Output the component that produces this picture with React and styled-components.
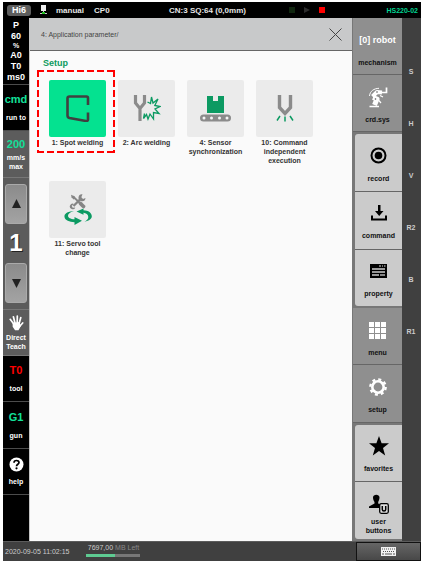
import React from "react";
import styled, { createGlobalStyle } from "styled-components";

const GlobalStyle = createGlobalStyle`
  * { box-sizing: border-box; }
  body { margin: 0; background: #fff; }
  button { font: inherit; color: inherit; border: 0; padding: 0; margin: 0; cursor: pointer; }
  svg { display: block; flex: none; }
  h1, p { margin: 0; }
`;

const Frame = styled.div`
  min-height: 100vh;
  padding: 2px 1px 2px 3px;
  display: flex;
  font-family: "Liberation Sans", Arial, sans-serif;
  font-size: 8px;
`;

const Pendant = styled.div`
  flex: 1;
  display: grid;
  grid-template-rows: 16px 1fr 20px;
  background: #404040;
`;

const TopBar = styled.header`
  display: grid;
  grid-template-columns: 162px 120px 1fr auto;
  align-items: center;
  padding: 0 3px 0 4px;
  background: #000;
  color: #e6e6e6;
  font-weight: bold;
  white-space: nowrap;
`;

const Cluster = styled.div`
  display: flex;
  align-items: center;
  gap: ${(p) => p.$gap || 8}px;
`;

const Brand = styled.span`
  width: 24px;
  border-radius: 3px;
  background: #5e5e5e;
  color: #fff;
  font-size: 9px;
  line-height: 11px;
  text-align: center;
`;

const RobotModel = styled.span`
  color: #00d492;
  font-size: 7px;
  text-align: right;
`;

const Body = styled.div`
  display: grid;
  grid-template-columns: 26px minmax(0, 1fr) 50px 19px;
  min-height: 0;
`;

const LeftRail = styled.aside`
  display: flex;
  flex-direction: column;
  color: #fff;
  background: #000;
  font-weight: bold;
  text-align: center;
`;

const railCell = `
  display: flex;
  flex-direction: column;
  align-items: center;
  justify-content: center;
  width: 100%;
  line-height: 9px;
`;

const RailButton = styled.button`
  ${railCell}
  flex: 46 0 46px;
  gap: ${(p) => p.$gap ?? 8}px;
  background: ${(p) => (p.$light ? "#5c5c5c" : "#000")};
  border-bottom: 1px solid ${(p) => (p.$light ? "#777" : "#4c4c4c")};
  font-size: 7px;
`;

const RailBlank = styled.div`
  flex: 46 0 46px;
`;

const RailStatus = styled.div`
  ${railCell}
  flex: 67 0 67px;
  border-bottom: 1px solid #4c4c4c;
  font-size: 9px;
  line-height: 11px;
`;

const RailUnit = styled.span`
  font-size: 7px;
  line-height: 8px;
`;

const RailValue = styled.span`
  font-size: 11px;
  line-height: 12px;
  color: ${(p) => p.$color || "#12e09a"};
`;

const Stepper = styled.div`
  flex: 132 0 132px;
  display: flex;
  flex-direction: column;
  align-items: center;
  justify-content: space-between;
  padding: 6px 2px;
  background: #5c5c5c;
  border-bottom: 1px solid #777;
`;

const StepButton = styled.button`
  display: flex;
  align-items: center;
  justify-content: center;
  width: 22px;
  height: 40px;
  border: 1px solid #aaa;
  border-radius: 3px;
  background: linear-gradient(#8b8b8b, #a3a3a3);
`;

const StepValue = styled.output`
  font-size: 24px;
  line-height: 24px;
  text-shadow: 1px 1px 0 #222;
`;

const Main = styled.main`
  display: flex;
  flex-direction: column;
  background: #fafafa;
  border-left: 1px solid #c4c4c4;
`;

const PathBar = styled.nav`
  display: flex;
  align-items: center;
  justify-content: space-between;
  height: 33px;
  padding: 0 10px 0 11px;
  background: #c8c9ca;
  border-bottom: 1px solid #666;
  color: #444;
  font-size: 7px;
`;

const CloseButton = styled.button`
  background: none;
`;

const Section = styled.section`
  padding: 6px 13px;
`;

const SectionTitle = styled.h1`
  color: #0c9a5e;
  font-size: 9px;
  line-height: 12px;
  font-weight: bold;
  margin-bottom: 11px;
`;

const Tiles = styled.div`
  display: grid;
  grid-template-columns: repeat(auto-fill, 69px);
  grid-auto-rows: 101px;
`;

const Tile = styled.button`
  position: relative;
  display: flex;
  flex-direction: column;
  align-items: center;
  background: none;
  color: #333;
  font-size: 7px;
  line-height: 9px;
  font-weight: bold;
`;

const TileFace = styled.span`
  display: flex;
  align-items: center;
  justify-content: center;
  width: 57px;
  height: 57px;
  margin-bottom: 1px;
  border-radius: 2px;
  background: ${(p) => (p.$active ? "#04e290" : "#ebebeb")};
`;

const TileLine = styled.span`
  white-space: nowrap;
`;

const horizontalDash = "repeating-linear-gradient(90deg, #f00 0 7px, transparent 7px 10px)";
const verticalDash = "repeating-linear-gradient(180deg, #f00 0 7px, transparent 7px 10px)";

const Callout = styled.span`
  position: absolute;
  inset: -10px -3px auto -6px;
  height: 83px;
  pointer-events: none;
  background:
    ${horizontalDash} top / 100% 2px no-repeat,
    ${horizontalDash} bottom / 100% 2px no-repeat,
    ${verticalDash} left / 2px 100% no-repeat,
    ${verticalDash} right / 2px 100% no-repeat;
`;

const KeyColumn = styled.nav`
  display: flex;
  flex-direction: column;
  background: #8e8e8e;
  border-left: 1px solid #777;
`;

const KeyGroup = styled.div`
  flex: ${(p) => p.$count} 0 0;
  display: flex;
  flex-direction: column;
  padding: ${(p) => (p.$raised ? "2px 0 2px 2px" : "0")};
  background: ${(p) => (p.$raised ? "#777" : "transparent")};
`;

const Key = styled.button`
  flex: 1;
  display: grid;
  grid-template-rows: 27px 18px;
  align-content: center;
  align-items: center;
  justify-items: center;
  padding-top: ${(p) => (p.$raised ? 4 : 6)}px;
  color: #111;
  background: ${(p) => (p.$raised ? "#cbcbcb" : "#8f8f8f")};
  border-bottom: 1px solid #666;
  font-size: 7px;
  line-height: 9px;
  font-weight: bold;
  white-space: pre-line;
  ${(p) => p.$raised && `
    &:first-child { border-top-left-radius: 3px; }
    &:last-child { border-bottom-left-radius: 3px; border-bottom: 0; }
  `}
`;

const KeyHeading = styled.span`
  color: #fff;
  font-size: 9px;
`;

const AxisColumn = styled.aside`
  display: flex;
  flex-direction: column;
  padding-top: 28px;
  background: #404040;
  color: #ccc;
  font-size: 7px;
  font-weight: bold;
  text-align: center;
`;

const AxisLabel = styled.span`
  height: 52px;
  line-height: 52px;
  padding-right: 1px;
`;

const Footer = styled.footer`
  display: flex;
  align-items: stretch;
  gap: 17px;
  padding-left: 2px;
  background: #404040;
  border-top: 1px solid #5c5c5c;
  color: #ccc;
  font-size: 7px;
`;

const Clock = styled.time`
  align-self: center;
  white-space: nowrap;
`;

const Storage = styled.label`
  width: 54px;
  padding-top: 2px;
  line-height: 8px;
  white-space: nowrap;
  text-align: center;
`;

const StorageUnit = styled.span`
  color: #888;
`;

const StorageBar = styled.progress`
  display: block;
  width: 100%;
  height: 3px;
  margin-top: 2px;
  appearance: none;
  border: 0;
  &::-webkit-progress-bar { background: #777; }
  &::-webkit-progress-value { background: #5ecb92; }
`;

const KeyboardButton = styled.button`
  display: flex;
  align-items: center;
  justify-content: center;
  width: 65px;
  margin-left: auto;
  border: 1px solid #111;
  background: linear-gradient(#666, #484848);
`;

const MonitorIcon = () => (
  <svg width="9" height="10" viewBox="0 0 9 10">
    <path d="M2 0h5v6H2z" fill="#eee" />
    <path d="M4 6h1v2H4zM1 8h7v1H1z" fill="#ccc" />
    <path d="M3 7h3v2H3z" fill="#22c322" />
  </svg>
);
const StopIcon = ({ color }) => (
  <svg width="6" height="6"><rect width="6" height="6" fill={color} /></svg>
);
const PlayIcon = () => (
  <svg width="6" height="6"><path d="M0 0L6 3L0 6z" fill="#2c2c2c" /></svg>
);
const Arrow = ({ down }) => (
  <svg width="9" height="9" viewBox="0 0 9 9">
    <path d={down ? "M0 0h9L4.500 9z" : "M0 9h9L4.500 0z"} fill="#222" />
  </svg>
);
const HandIcon = () => (
  <svg width="15" height="16" viewBox="0 0 15 16" fill="none" stroke="#fff" strokeWidth="1.700" strokeLinecap="round">
    <path d="M4.800 9L1.200 4.300M6 8L4.400 1.800M8.200 8L8.300 1M10 9L11.800 2.500M10.500 11.500L13.700 8" />
    <path d="M4.500 8.500L9.800 8L11 11L9 14.500H6.500L4.500 11.500z" fill="#fff" />
  </svg>
);
const HelpIcon = () => (
  <svg width="15" height="15" viewBox="0 0 15 15">
    <circle cx="7.500" cy="7.500" r="7" fill="#fff" />
    <path d="M5 5.800C5 2.800 10 2.800 10 5.600C10 7.300 7.500 7.200 7.500 9.200" fill="none" stroke="#000" strokeWidth="1.700" />
    <circle cx="7.500" cy="11.300" r="1.100" />
  </svg>
);
const CloseIcon = () => (
  <svg width="13" height="13" viewBox="0 0 13 13">
    <path d="M.5 .5L12.500 12.500M12.500 .5L.5 12.500" stroke="#444" strokeWidth="1" />
  </svg>
);

const SpotIcon = () => (
  <svg width="24" height="27" viewBox="0 0 24 27">
    <path d="M22 10V3Q22 1.500 20.500 1.500H3.500Q1.500 1.500 1.500 3.500V20.500Q1.500 22.500 3.500 23L20 26Q22 26.300 22 24.500V17.500" fill="none" stroke="#404040" strokeWidth="2.600" />
  </svg>
);
const ArcIcon = () => (
  <svg width="28" height="27" viewBox="0 0 28 27" fill="none">
    <path d="M2.500 0V8L7 13.500L11.500 8V0M7 12.500V26" stroke="#8b8b8b" strokeWidth="3.200" />
    <path d="M14.500 7L17.500 8.500L18.500 2L20 8L25 4L21.800 10.500L27 11.500L22 14L26 18.500L20.500 17.500V24L17 19L15 24L13.500 19.500L10.500 23.500L11.500 18.500" stroke="#0c9a62" strokeWidth="1.300" />
  </svg>
);
const SensorIcon = () => (
  <svg width="31" height="26" viewBox="0 0 31 26">
    <path d="M7 0H13V5H18V0H24V17H7z" fill="#0c9a62" />
    <rect y="18.500" width="31" height="7" rx="3.500" fill="#8b8b8b" />
    {[4, 11.5, 19.5, 27].map((x) => <circle key={x} cx={x} cy="22" r="1.500" fill="#f4f4f4" />)}
  </svg>
);
const CommandIcon = () => (
  <svg width="18" height="27" viewBox="0 0 18 27" fill="none">
    <path d="M3.500 0V12.500L9 18.500L14.500 12.500V0" stroke="#8b8b8b" strokeWidth="3.400" />
    <path d="M4 21L1 25.500M9 21.500V26.500M14 21L17 25.500" stroke="#0c9a62" strokeWidth="1.500" />
  </svg>
);
const ServoIcon = () => (
  <svg width="28" height="31" viewBox="0 0 28 31">
    <path d="M9 2.500L18 11" stroke="#858585" strokeWidth="1.800" />
    <path d="M16.500 9.500L19.500 12.500" stroke="#858585" strokeWidth="3.800" strokeLinecap="round" />
    <path d="M7 .8L10.500 2.200L11.500 4.500L9.500 5.500L7.500 3.200z" fill="#858585" />
    <path d="M9.500 12L17.500 4" stroke="#858585" strokeWidth="2.300" />
    <path d="M18.500 .2A3.500 3.500 0 1 0 21.500 4L19 5L17.300 3.300zM10 10A2.800 2.800 0 1 0 11.300 13.400L8.700 13.800L7.700 11.800z" fill="#858585" />
    <path d="M10 17C3 17.500 0 20 .5 23C1 26.300 5.500 28 10.500 28.200V31L18 26.700L10.500 23V25.300C6.500 25 4 23.700 4 21.700C4 19.500 6.500 18 10 17z" fill="#0c9a62" />
    <path d="M12.500 17.500L19.500 14.500V16.300C24.500 16.500 27.800 19 27.800 22.300C27.800 24.800 25.500 26.700 20.500 27.700C23 26.300 24.300 25 24.300 23C24.300 20.500 22 19 19.500 18.800V20.800z" fill="#0c9a62" />
  </svg>
);

const RobotIcon = () => (
  <svg width="20" height="21" viewBox="0 0 20 21" fill="none" stroke="#fff">
    <path d="M4.500 9.500L9 5L14 5.500" strokeWidth="4" strokeLinejoin="round" />
    <path d="M1.500 9C2 4 6 1.500 11 1.300" strokeWidth="1" />
    <path d="M5 10.500L9 12L6.500 18" strokeWidth="5" strokeLinejoin="round" />
    <path d="M14 5.500H18.500V.5M1.500 19.500H11" strokeWidth="1.700" />
    <path d="M10 12.500L13 16M12 8.500L15 10" strokeWidth="1.200" />
    <circle cx="9" cy="5" r=".8" fill="#555" stroke="none" />
    <circle cx="7.500" cy="12" r=".8" fill="#555" stroke="none" />
  </svg>
);
const RecordIcon = () => (
  <svg width="17" height="17" viewBox="0 0 17 17">
    <circle cx="8.500" cy="8.500" r="7" fill="none" stroke="#000" strokeWidth="2" />
    <circle cx="8.500" cy="8.500" r="3.800" />
  </svg>
);
const DownloadIcon = () => (
  <svg width="16" height="16" viewBox="0 0 16 16">
    <path d="M7 0H9.500V6H12.500L8.200 11L4 6H7z" />
    <path d="M1 10.500V14.500H15V10.500" fill="none" stroke="#000" strokeWidth="2" />
  </svg>
);
const PropertyIcon = () => (
  <svg width="17" height="14" viewBox="0 0 17 14">
    <rect width="17" height="14" />
    <path d="M2 5H15M2 8H15M2 11H9" stroke="#ccc" strokeWidth="1.300" />
    <path d="M9 2H11M12 2H13M14 2H15.500" stroke="#ddd" strokeWidth="1" />
    <path d="M10 11H15" stroke="#ccc" strokeWidth="1.300" />
  </svg>
);
const MenuIcon = () => (
  <svg width="17" height="17" viewBox="0 0 17 17" fill="#fff">
    {[0, 6, 12].map((y) => [0, 6, 12].map((x) => <rect key={`${x}-${y}`} x={x} y={y} width="5" height="5" />))}
  </svg>
);
const GearIcon = () => (
  <svg width="18" height="18" viewBox="0 0 18 18" fill="none" stroke="#fff">
    <circle cx="9" cy="9" r="5.700" strokeWidth="2.600" />
    <circle cx="9" cy="9" r="7.700" strokeWidth="2.300" strokeDasharray="3 3.050" />
  </svg>
);
const StarIcon = () => (
  <svg width="20" height="20" viewBox="0 0 20 20">
    <path d="M10 0L12.600 7.200H20L14 11.900L16.200 19.500L10 15L3.800 19.500L6 11.900L0 7.200H7.400z" />
  </svg>
);
const UserIcon = () => (
  <svg width="20" height="20" viewBox="0 0 20 20">
    <path d="M4 3.500C4 -.3 10.500 -.3 10.500 3.500C10.500 6 9.500 7 9.200 8V9.500L12 11V14H0V12.500L5.500 9.500V8C5 7 4 6 4 3.500z" />
    <rect x="10.700" y="9.700" width="8.600" height="9.600" rx="1.500" fill="#ddd" stroke="#000" strokeWidth="1.300" />
    <path d="M13.300 12V15.500Q13.300 17 15 17Q16.700 17 16.700 15.500V12" fill="none" stroke="#000" strokeWidth="1.500" />
  </svg>
);
const KeyboardIcon = () => (
  <svg width="15" height="9" viewBox="0 0 15 9">
    <rect width="15" height="9" fill="#f2f2f2" />
    <path d="M1 2H14M2 4.500H14" stroke="#555" strokeWidth="1" strokeDasharray="1 1" />
    <path d="M1 7H3M4 7H11M12 7H14" stroke="#555" strokeWidth="1" />
  </svg>
);

const tiles = [
  { lines: ["1: Spot welding"], Icon: SpotIcon, active: true },
  { lines: ["2: Arc welding"], Icon: ArcIcon },
  { lines: ["4: Sensor", "synchronization"], Icon: SensorIcon },
  { lines: ["10: Command", "independent", "execution"], Icon: CommandIcon },
  { lines: ["11: Servo tool", "change"], Icon: ServoIcon },
];

const keyGroups = [
  { keys: [{ label: "mechanism", heading: "[0] robot" }, { label: "crd.sys", Icon: RobotIcon }] },
  {
    raised: true,
    keys: [
      { label: "record", Icon: RecordIcon },
      { label: "command", Icon: DownloadIcon },
      { label: "property", Icon: PropertyIcon },
    ],
  },
  { keys: [{ label: "menu", Icon: MenuIcon }, { label: "setup", Icon: GearIcon }] },
  {
    raised: true,
    keys: [{ label: "favorites", Icon: StarIcon }, { label: "user\nbuttons", Icon: UserIcon }],
  },
];

export default function App() {
  return (
    <Frame>
      <GlobalStyle />
      <Pendant>
        <TopBar>
          <Cluster>
            <Brand>Hi6</Brand>
            <MonitorIcon />
            <Cluster $gap={10}>
              <span>manual</span>
              <span>CP0</span>
            </Cluster>
          </Cluster>
          <span>CN:3 SQ:64 (0,0mm)</span>
          <Cluster $gap={9}>
            <StopIcon color="#10260f" />
            <PlayIcon />
            <StopIcon color="#f00" />
          </Cluster>
          <RobotModel>HS220-02</RobotModel>
        </TopBar>

        <Body>
          <LeftRail>
            <RailStatus>
              <span>P</span>
              <span>60</span>
              <RailUnit>%</RailUnit>
              <span>A0</span>
              <span>T0</span>
              <span>ms0</span>
            </RailStatus>
            <RailButton><RailValue>cmd</RailValue>run to</RailButton>
            <RailButton $light $gap={3}>
              <RailValue>200</RailValue>
              <span>mm/s<br />max</span>
            </RailButton>
            <Stepper>
              <StepButton aria-label="Increase step"><Arrow /></StepButton>
              <StepValue>1</StepValue>
              <StepButton aria-label="Decrease step"><Arrow down /></StepButton>
            </Stepper>
            <RailButton $light $gap={2}>
              <HandIcon />
              <span>Direct<br />Teach</span>
            </RailButton>
            <RailButton><RailValue $color="#f00">T0</RailValue>tool</RailButton>
            <RailButton><RailValue>G1</RailValue>gun</RailButton>
            <RailButton $gap={5}><HelpIcon />help</RailButton>
            <RailBlank />
          </LeftRail>

          <Main>
            <PathBar>
              <span>4: Application parameter/</span>
              <CloseButton aria-label="Close"><CloseIcon /></CloseButton>
            </PathBar>
            <Section>
              <SectionTitle>Setup</SectionTitle>
              <Tiles>
                {tiles.map(({ lines, Icon, active }) => (
                  <Tile key={lines[0]}>
                    <TileFace $active={active}><Icon /></TileFace>
                    {lines.map((line) => <TileLine key={line}>{line}</TileLine>)}
                    {active && <Callout />}
                  </Tile>
                ))}
              </Tiles>
            </Section>
          </Main>

          <KeyColumn>
            {keyGroups.map((group) => (
              <KeyGroup key={group.keys[0].label} $count={group.keys.length} $raised={group.raised}>
                {group.keys.map(({ label, heading, Icon }) => (
                  <Key key={label} $raised={group.raised}>
                    {heading ? <KeyHeading>{heading}</KeyHeading> : <Icon />}
                    <span>{label}</span>
                  </Key>
                ))}
              </KeyGroup>
            ))}
          </KeyColumn>

          <AxisColumn>
            {["S", "H", "V", "R2", "B", "R1"].map((axis) => <AxisLabel key={axis}>{axis}</AxisLabel>)}
          </AxisColumn>
        </Body>

        <Footer>
          <Clock>2020-09-05 11:02:15</Clock>
          <Storage>
            7697,00 <StorageUnit>MB Left</StorageUnit>
            <StorageBar value="52" max="100" />
          </Storage>
          <KeyboardButton aria-label="Keyboard"><KeyboardIcon /></KeyboardButton>
        </Footer>
      </Pendant>
    </Frame>
  );
}
